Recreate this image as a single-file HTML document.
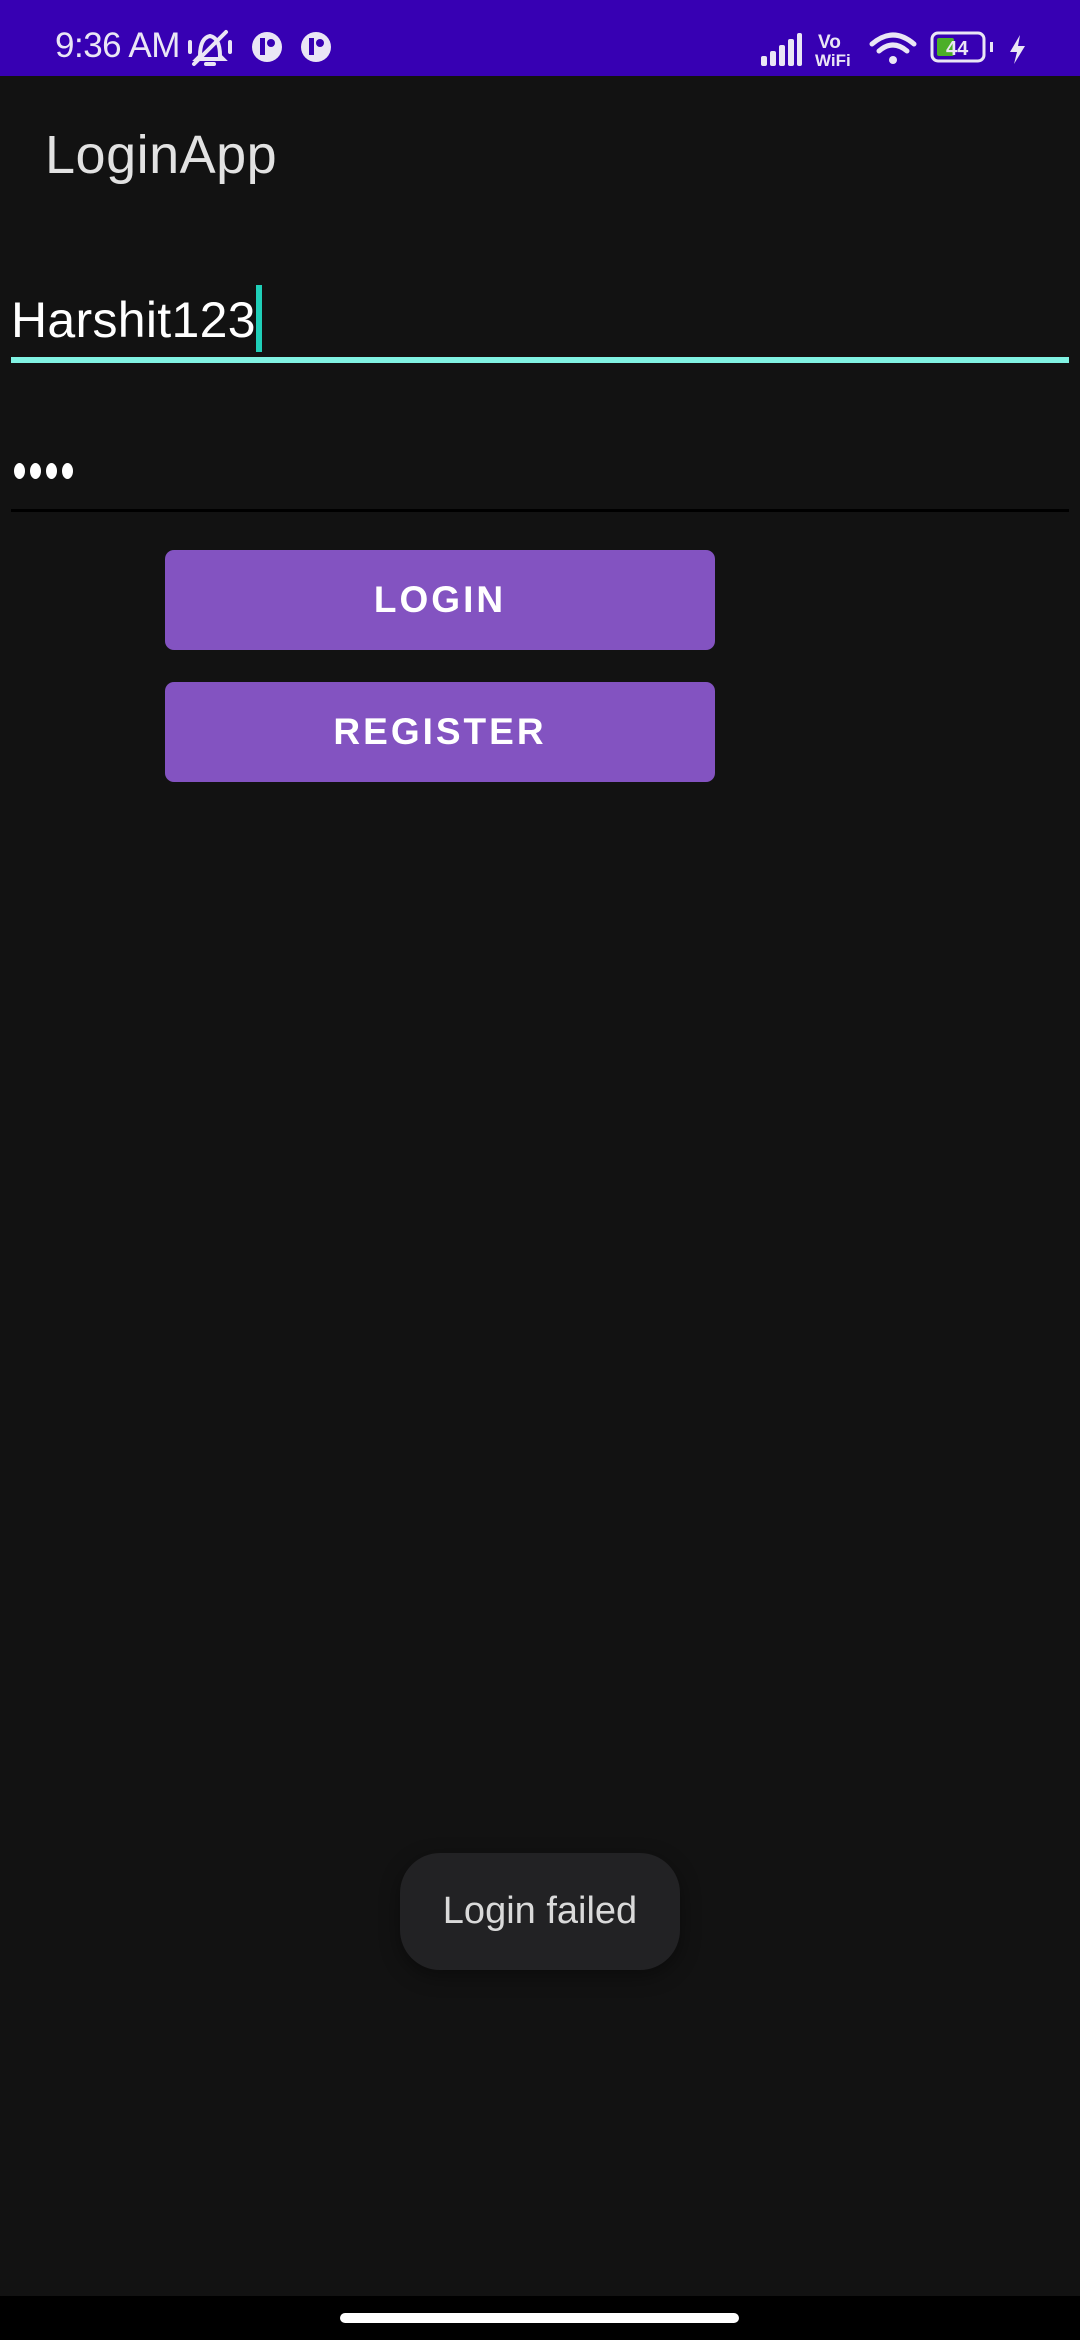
<!DOCTYPE html>
<html><head><meta charset="utf-8"><style>
*{margin:0;padding:0;box-sizing:border-box}
body{width:1080px;height:2340px;background:#121212;position:relative;overflow:hidden;font-family:"Liberation Sans",Roboto,sans-serif}
.abs{position:absolute}
</style></head><body>
<div class="abs" style="left:0;top:0;width:1080px;height:76px;background:#3700B3"></div>
<div class="abs" style="left:55px;top:26px;font-size:35px;color:#eae6f5;line-height:40px;letter-spacing:-0.5px">9:36 AM</div>
<svg class="abs" style="left:186px;top:26px" width="150" height="44" viewBox="0 0 150 44">
 <g fill="none" stroke="#eae6f5" stroke-width="4" stroke-linecap="round">
  <path d="M14 30 Q14 12 24 10 Q34 12 34 30 L37 33 H11 Z"/><path d="M20 38 H28"/><path d="M8 38 L40 6"/>
  <path d="M4 16 V26 M44 16 V26"/>
 </g>
 <circle cx="81" cy="21" r="15" fill="#eae6f5"/><rect x="74" y="12" width="5" height="17" fill="#3700B3"/><circle cx="85" cy="17" r="4" fill="#3700B3"/>
 <circle cx="130" cy="21" r="15" fill="#eae6f5"/><rect x="123" y="12" width="5" height="17" fill="#3700B3"/><circle cx="134" cy="17" r="4" fill="#3700B3"/>
</svg>
<svg class="abs" style="left:755px;top:28px" width="280" height="42" viewBox="755 28 280 42">
 <g fill="#eae6f5">
  <rect x="761" y="56" width="6" height="10" rx="2"/><rect x="770" y="51" width="6" height="15" rx="2"/><rect x="779" y="45" width="6" height="21" rx="2"/><rect x="788" y="39" width="6" height="27" rx="2"/><rect x="797" y="33" width="5" height="33" rx="2"/>
 </g>
 <text x="818" y="48" font-size="19" fill="#eae6f5" font-family="Liberation Sans" font-weight="bold">Vo</text>
 <text x="815" y="66" font-size="17" fill="#eae6f5" font-family="Liberation Sans" font-weight="bold">WiFi</text>
 <g fill="none" stroke="#eae6f5" stroke-width="5" stroke-linecap="round">
  <path d="M872 44 Q893 26 914 44"/><path d="M879 51 Q893 39 907 51"/>
 </g>
 <circle cx="893" cy="60" r="4" fill="#eae6f5"/>
 <rect x="932" y="33" width="52" height="28" rx="6" fill="none" stroke="#eae6f5" stroke-width="3"/>
 <rect x="937" y="38" width="17" height="18" rx="2" fill="#4caf28"/>
 <text x="946" y="55" font-size="20" fill="#eae6f5" font-family="Liberation Sans" font-weight="bold">44</text>
 <rect x="990" y="42" width="3" height="10" fill="#eae6f5"/>
 <path d="M1020 35 L1010 52 H1017 L1014 64 L1025 46 H1018 Z" fill="#eae6f5"/>
</svg>

<div class="abs" style="left:45px;top:124px;font-size:54px;color:#e2e2e2;line-height:62px;letter-spacing:0.5px">LoginApp</div>

<div class="abs" style="left:11px;top:290px;font-size:50px;color:#fff;line-height:60px;letter-spacing:0.3px">Harshit123</div>
<div class="abs" style="left:256px;top:285px;width:6px;height:67px;background:#1fcfb8"></div>
<div class="abs" style="left:11px;top:357px;width:1058px;height:6px;background:#80f2e2"></div>

<div class="abs" style="left:14px;top:463px;display:flex;gap:5px">
 <span style="width:11px;height:16px;border-radius:50%;background:#fff;display:block"></span><span style="width:11px;height:16px;border-radius:50%;background:#fff;display:block"></span><span style="width:11px;height:16px;border-radius:50%;background:#fff;display:block"></span><span style="width:11px;height:16px;border-radius:50%;background:#fff;display:block"></span>
</div>
<div class="abs" style="left:11px;top:509px;width:1058px;height:3px;background:#000"></div>

<div class="abs" style="left:165px;top:550px;width:550px;height:100px;background:#8353c1;border-radius:9px;color:#fff;font-size:37px;letter-spacing:3px;text-align:center;line-height:100px;font-weight:bold">LOGIN</div>
<div class="abs" style="left:165px;top:682px;width:550px;height:100px;background:#8353c1;border-radius:9px;color:#fff;font-size:37px;letter-spacing:3px;text-align:center;line-height:100px;font-weight:bold">REGISTER</div>

<div class="abs" style="left:400px;top:1853px;width:280px;height:117px;background:#222224;border-radius:40px;color:#dadada;font-size:38px;text-align:center;line-height:117px;box-shadow:0 6px 20px rgba(0,0,0,0.4)">Login failed</div>

<div class="abs" style="left:0;top:2296px;width:1080px;height:44px;background:#000"></div>
<div class="abs" style="left:340px;top:2313px;width:399px;height:10px;background:#fff;border-radius:5px"></div>
</body></html>
